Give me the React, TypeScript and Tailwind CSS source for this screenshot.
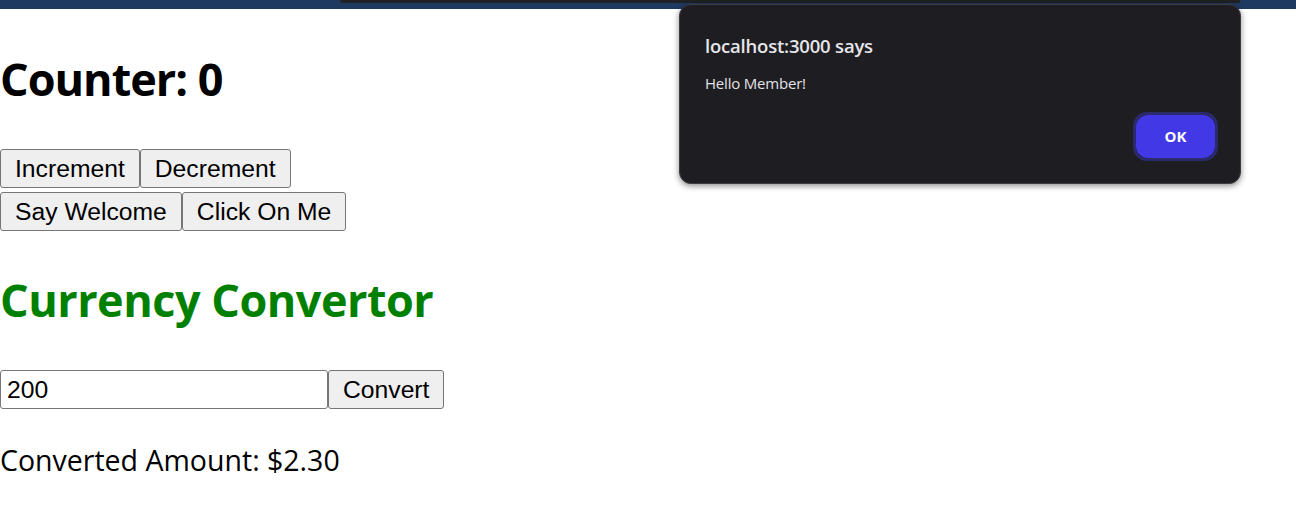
import React, { useState } from "react";

const sans = "font-['Open_Sans','Noto_Sans',sans-serif]";
const arial = "font-['Liberation_Sans',Arial,sans-serif]";

function NativeButton({ children }: { children: React.ReactNode }) {
    return (
        <button className={`${arial} h-[39px] px-[14px] text-[24.7px] leading-[28px] text-black bg-[#efefef] border border-[#767676] rounded-[3px]`}>
            {children}
        </button>
    );
}

function AlertBox() {
    return (
        <div className={`${sans} absolute left-[679px] top-[4px] w-[562px] h-[180px] rounded-[12px] bg-[#1e1d22] border border-[#3c3b42] shadow-[0_2px_6px_rgba(0,0,0,0.45)] flex flex-col px-[25px]`}>
            <div className="mt-[29px] text-[18.5px] leading-[24px] font-semibold text-[#e6e6ea] tracking-[-0.2px]">localhost:3000 says</div>
            <div className="mt-[15px] text-[15px] leading-[20px] text-[#e2e2e6] tracking-[-0.2px]">Hello Member!</div>
            <div className="flex justify-end mt-auto mb-[22px] mr-[-3px]">
                <div className="rounded-[14px] border-[3px] border-[#2b2a6c]">
                    <button className="w-[79px] h-[43px] rounded-[12px] bg-[#4338e6] text-white text-[15px] font-bold">OK</button>
                </div>
            </div>
        </div>
    );
}

export default function App() {
    const [count] = useState(0);
    const [amount, setAmount] = useState("200");

    return (
        <div className="relative w-[1296px] h-[515px] bg-white overflow-hidden">
            <div className="h-[9px] w-full bg-[#1f3a60]" />
            <div className="absolute left-[340px] top-0 w-[900px] h-[3px] rounded-bl-[4px] bg-[#202124]" />

            <main className="flex flex-col items-start">
                <h1 className={`${sans} mt-[38px] text-[45px] leading-[64px] font-bold tracking-[-1px] text-black`}>Counter: {count}</h1>
                <div className="flex mt-[38px]">
                    <NativeButton>Increment</NativeButton>
                    <NativeButton>Decrement</NativeButton>
                </div>
                <div className="flex mt-[4px]">
                    <NativeButton>Say Welcome</NativeButton>
                    <NativeButton>Click On Me</NativeButton>
                </div>

                <h2 className={`${sans} mt-[39px] text-[45px] leading-[60px] font-bold tracking-[-0.5px] text-[#008000]`}>Currency Convertor</h2>
                <div className="flex mt-[40px]">
                    <input
                        value={amount}
                        onChange={(e) => setAmount(e.target.value)}
                        className={`${arial} w-[328px] h-[39px] px-[6px] text-[24.7px] text-black border border-[#767676] rounded-[3px] outline-none`}
                    />
                    <NativeButton>Convert</NativeButton>
                </div>
                <p className={`${sans} mt-[32px] text-[28.5px] leading-[38px] text-black`}>Converted Amount: $2.30</p>
            </main>

            <AlertBox />
        </div>
    );
}
